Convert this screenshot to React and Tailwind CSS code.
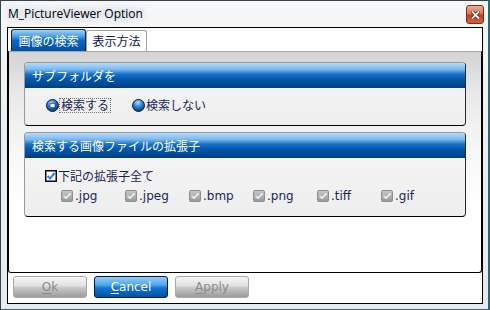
import React from "react";

const jp = { fontFamily: '"Noto Sans CJK JP", "DejaVu Sans", sans-serif' };
const lat = { fontFamily: '"DejaVu Sans", "Noto Sans CJK JP", sans-serif' };

function RadioOn() {
  return (
    <svg width="13" height="13" viewBox="0 0 13 13">
      <defs>
        <radialGradient id="rgOn" cx="40%" cy="30%" r="75%">
          <stop offset="0" stopColor="#a8d8ff" />
          <stop offset="0.5" stopColor="#1b74d0" />
          <stop offset="1" stopColor="#07306a" />
        </radialGradient>
      </defs>
      <circle cx="6.5" cy="6.5" r="6" fill="url(#rgOn)" stroke="#0b1d42" />
      <rect x="4" y="4.3" width="5" height="4.4" rx="0.8" fill="#ffffff" stroke="#0f2d66" strokeWidth="0.8" />
    </svg>
  );
}

function RadioOff() {
  return (
    <svg width="13" height="13" viewBox="0 0 13 13">
      <defs>
        <radialGradient id="rgOff" cx="45%" cy="25%" r="80%">
          <stop offset="0" stopColor="#b6e0ff" />
          <stop offset="0.45" stopColor="#2b86dc" />
          <stop offset="1" stopColor="#06306a" />
        </radialGradient>
      </defs>
      <circle cx="6.5" cy="6.5" r="6" fill="url(#rgOff)" stroke="#0b1d42" />
    </svg>
  );
}

function CheckOn() {
  return (
    <svg width="12" height="12" viewBox="0 0 12 12">
      <rect x="0.75" y="0.75" width="10.5" height="10.5" fill="#ffffff" stroke="#0a0c1e" strokeWidth="1.5" />
      <path d="M2.6 6 L5 8.6 L9.6 3" fill="none" stroke="#2a7fe0" strokeWidth="2" />
    </svg>
  );
}

function CheckGray() {
  return (
    <svg width="12" height="12" viewBox="0 0 12 12">
      <defs>
        <linearGradient id="cg" x1="0" y1="0" x2="0" y2="1">
          <stop offset="0" stopColor="#c6c6c6" />
          <stop offset="1" stopColor="#9a9a9a" />
        </linearGradient>
      </defs>
      <rect x="0.5" y="0.5" width="11" height="11" rx="1.2" fill="url(#cg)" stroke="#8e8e8e" />
      <path d="M2.8 6 L5 8.2 L9.4 3.4" fill="none" stroke="#f4f4f4" strokeWidth="1.6" />
    </svg>
  );
}

function GroupHeader({ children }) {
  return (
    <div
      className="h-[25px] flex items-center pl-[7px] text-white text-[12px] bg-[linear-gradient(to_bottom,#b4dbfa_0%,#7dbaf0_25%,#1a6fc6_45%,#0058ad_65%,#003d80_100%)]"
      style={jp}
    >
      {children}
    </div>
  );
}

function Button({ label, first, primary }) {
  const base =
    "w-[74px] h-[22px] rounded-[3px] border flex items-center justify-center text-[12px] leading-none";
  const cls = primary
    ? "border-[#0b1a33] text-white bg-[linear-gradient(to_bottom,#93cdf8_0%,#4ea5ec_40%,#1473d2_55%,#0052a8_100%)]"
    : "border-[#a8a8a8] text-[#8a8a8a] bg-[linear-gradient(to_bottom,#f5f5f5_0%,#e3e3e3_42%,#c6c6c6_55%,#9c9c9c_100%)]";
  return (
    <div className={`${base} ${cls}`} style={lat}>
      <span className="underline underline-offset-2">{first}</span>
      <span>{label.slice(first.length)}</span>
    </div>
  );
}

export default function App() {
  const exts = [".jpg", ".jpeg", ".bmp", ".png", ".tiff", ".gif"];
  return (
    <div className="w-[490px] h-[310px] flex flex-col border-l border-t border-r-2 border-b border-l-[#3a4246] border-t-[#3a4246] border-r-[#256b73] border-b-[#256b73] bg-[linear-gradient(to_bottom,#f6f7f8_0%,#eceff1_40%,#e6eaec_100%)] overflow-hidden">
      {/* Title bar */}
      <div className="h-[26px] flex items-start">
        <div
          className="pl-[7px] h-[26px] flex items-center text-[12px] text-black [text-shadow:0_0_9px_rgba(150,175,205,0.95)]"
          style={{ fontFamily: '"Open Sans", "DejaVu Sans", sans-serif' }}
        >
          M_PictureViewer Option
        </div>
        <div className="ml-auto mt-[4px] mr-[4px] w-[18px] h-[19px] rounded-[3px] border border-[#7b2e1c] flex items-center justify-center bg-[linear-gradient(to_bottom,#eeab92_0%,#de7557_45%,#c2401e_52%,#d4603d_100%)]">
          <svg width="9" height="8" viewBox="0 0 9 8">
            <path d="M1.5 1 L7.5 7 M7.5 1 L1.5 7" stroke="#5c2414" strokeWidth="3.4" strokeLinecap="square" />
            <path d="M1.5 1 L7.5 7 M7.5 1 L1.5 7" stroke="#ffffff" strokeWidth="1.8" strokeLinecap="square" />
          </svg>
        </div>
      </div>

      {/* Client area */}
      <div className="ml-[6px] w-[476px] h-[277px] border border-black bg-white flex flex-col">
        {/* Tabs */}
        <div className="pt-[1px] pl-[3px] flex items-end h-[23px]">
          <div
            className="w-[75px] h-[22px] rounded-t-[3px] border border-b-0 border-[#0d2c5c] flex items-center justify-center text-white text-[12px] bg-[linear-gradient(to_bottom,#9fd0f8_0%,#4c9de6_30%,#0d66c2_50%,#00509e_100%)]"
            style={jp}
          >
            画像の検索
          </div>
          <div
            className="w-[61px] h-[21px] rounded-t-[3px] border border-b-0 border-[#a0a0a0] bg-white flex items-center justify-center text-[#10145a] text-[12px]"
            style={jp}
          >
            表示方法
          </div>
        </div>

        {/* Tab page */}
        <div className="h-[222px] border border-black border-t-[#a6a6a6] rounded-b-[3px] bg-[linear-gradient(to_bottom,#d3d3d3_0%,#e8e8e8_18%,#f7f7f7_45%,#ffffff_70%)] flex flex-col pl-[15px] pt-[10px]">
          {/* Group 1 */}
          <div className="w-[442px] h-[64px] rounded-[4px] overflow-hidden border border-[#9a9a9a] border-r-[#2a2a2a] border-b-black bg-[linear-gradient(to_bottom,#f6f6f6,#eeeeee)] flex flex-col">
            <GroupHeader>サブフォルダを</GroupHeader>
            <div className="pt-[9px] pl-[21px] flex items-center h-[16px] box-content">
              <RadioOn />
              <span
                className="ml-[0px] h-[15px] px-[1px] border border-dotted border-[#777] flex items-center text-[12px] text-[#1a1e58]"
                style={jp}
              >
                検索する
              </span>
              <span className="ml-[21px] flex items-center">
                <RadioOff />
              </span>
              <span className="ml-[1px] text-[12px] text-[#1a1e58]" style={jp}>
                検索しない
              </span>
            </div>
          </div>

          {/* Group 2 */}
          <div className="mt-[6px] w-[442px] h-[85px] rounded-[4px] overflow-hidden border border-[#9a9a9a] border-r-[#2a2a2a] border-b-black bg-[linear-gradient(to_bottom,#f6f6f6,#eeeeee)] flex flex-col">
            <GroupHeader>検索する画像ファイルの拡張子</GroupHeader>
            <div className="pt-[11px] pl-[20px] flex items-center h-[13px] box-content">
              <CheckOn />
              <span className="ml-[1px] text-[12px] text-[#1a1e58]" style={jp}>
                下記の拡張子全て
              </span>
            </div>
            <div className="mt-[7px] pl-[36px] flex items-center h-[13px]">
              {exts.map((e) => (
                <div key={e} className="w-[64px] flex items-center">
                  <CheckGray />
                  <span className="ml-[2px] text-[12px] text-[#22265e]" style={lat}>
                    {e}
                  </span>
                </div>
              ))}
            </div>
          </div>
        </div>

        {/* Buttons */}
        <div className="mt-[3px] pl-[5px] flex gap-[7px]">
          <Button label="Ok" first="O" />
          <Button label="Cancel" first="C" primary />
          <Button label="Apply" first="A" />
        </div>
      </div>
    </div>
  );
}
